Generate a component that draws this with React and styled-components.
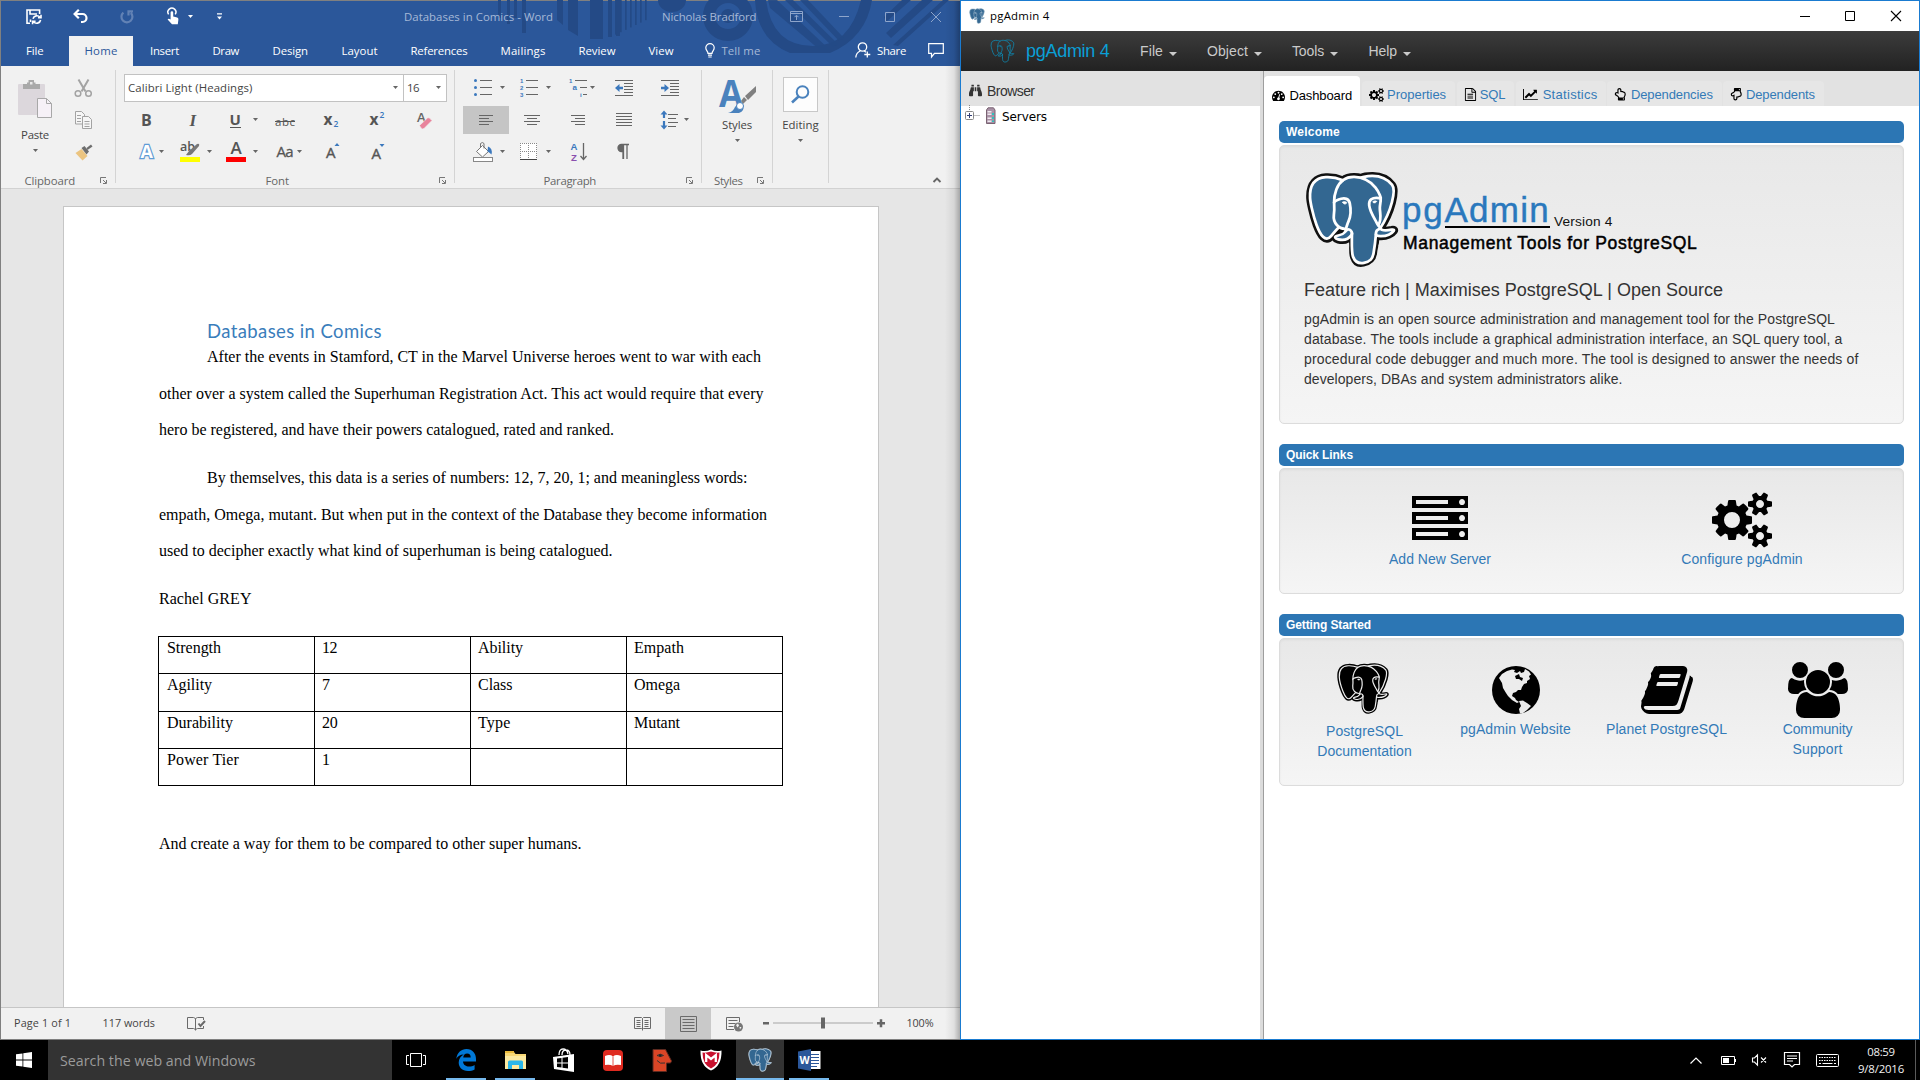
import React, { useLayoutEffect, useRef, useState } from "react";
import styled, { createGlobalStyle, css } from "styled-components";
import { FaBinoculars, FaRegHandPointUp, FaRegHandPointDown } from "react-icons/fa";

const UI = '"Open Sans", "Noto Sans", sans-serif';
const SANS = '"Liberation Sans", Arial, sans-serif';
const SERIF = '"Liberation Serif", "Times New Roman", serif';

const GlobalStyle = createGlobalStyle`
  * { box-sizing: border-box; }
  html, body { margin: 0; padding: 0; overflow: hidden; background: #000; }
  svg { display: block; flex: none; overflow: visible; }
`;

/* ---------- text that is tracked to a given measure ---------- */
const FitBox = styled.span`
  display: inline-block;
  flex: none;
  white-space: nowrap;
  width: ${(p) => p.$w}px;
  margin-left: ${(p) => p.$ml || 0}px;
`;

function Fit({ w, ml, children, className }) {
  const ref = useRef(null);
  const [spacing, setSpacing] = useState(0);
  useLayoutEffect(() => {
    const el = ref.current;
    el.style.letterSpacing = "0px";
    const natural = el.getBoundingClientRect().width;
    const n = el.textContent.length;
    const next = n ? (w - natural) / n : 0;
    el.style.letterSpacing = `${next}px`;
    setSpacing(next);
  }, [w, children]);
  return (
    <FitBox $w={w} $ml={ml} className={className}>
      <span ref={ref} style={{ letterSpacing: spacing }}>
        {children}
      </span>
    </FitBox>
  );
}

const Gap = styled.span`
  flex: none;
  width: ${(p) => p.$w}px;
`;

/* ---------- elephant ---------- */
const BODY =
  "M402.395,271.23c-50.302,10.376-53.76-6.655-53.76-6.655c53.111-78.808,75.313-178.843,56.153-203.326c-52.27-66.785-142.752-35.2-144.262-34.38l-0.486,0.087c-9.938-2.063-21.06-3.292-33.56-3.496c-22.761-0.373-40.026,5.967-53.127,15.902c0,0-161.411-66.495-153.904,83.63c1.597,31.938,45.776,241.657,98.471,178.312c19.26-23.163,37.869-42.748,37.869-42.748c9.243,6.14,20.308,9.272,31.908,8.147l0.901-0.765c-0.28,2.876-0.152,5.689,0.361,9.019c-13.575,15.167-9.586,17.83-36.723,23.416c-27.459,5.659-11.328,15.734-0.796,18.367c12.768,3.193,42.307,7.716,62.266-20.224l-0.796,3.188c5.319,4.26,9.054,27.711,8.428,48.969c-0.626,21.259-1.044,35.854,3.147,47.254c4.191,11.4,8.368,37.05,44.042,29.406c29.809-6.388,45.256-22.942,47.405-50.555c1.525-19.631,4.976-16.729,5.194-34.28l2.768-8.309c3.192-26.611,0.507-35.196,18.872-31.203l4.463,0.392c13.517,0.615,31.208-2.174,41.591-7c22.358-10.376,35.618-27.7,13.573-23.148z";
const LINES = [
  "M215.866,286.484c-1.385,49.516,0.348,99.377,5.193,111.495c4.848,12.118,15.223,35.688,50.9,28.045c29.806-6.39,40.651-18.756,45.357-46.051c3.466-20.082,10.148-75.854,11.005-87.281",
  "M173.104,38.256c0,0-161.521-66.016-154.012,84.109c1.597,31.938,45.779,241.664,98.473,178.316c19.256-23.166,36.671-41.335,36.671-41.335",
  "M260.349,26.207c-5.591,1.753,89.848-34.889,144.087,34.417c19.159,24.484-3.043,124.519-56.153,203.329",
  "M348.282,263.953c0,0,3.461,17.036,53.764,6.653c22.04-4.552,8.776,12.774-13.577,23.155c-18.345,8.514-59.474,10.696-60.146-1.069c-1.729-30.355,21.647-21.133,19.96-28.739c-1.525-6.85-11.979-13.573-18.894-30.338c-6.037-14.633-82.796-126.849,21.287-110.183c3.813-0.789-27.146-99.002-124.553-100.599c-97.385-1.597-94.19,119.762-94.19,119.762",
  "M188.604,274.334c-13.577,15.166-9.584,17.829-36.723,23.417c-27.459,5.66-11.326,15.733-0.797,18.365c12.768,3.195,42.307,7.718,62.266-20.229c6.078-8.509-0.036-22.086-8.385-25.547c-4.034-1.671-9.428-3.765-16.361,3.994z",
  "M187.715,274.069c-1.368-8.917,2.93-19.528,7.536-31.942c6.922-18.626,22.893-37.255,10.117-96.339c-9.523-44.029-73.396-9.163-73.436-3.193c-0.039,5.968,2.889,30.26-1.067,58.548c-5.162,36.913,23.488,68.132,56.479,64.938",
  "M350.676,123.432c0.863,15.994-3.445,26.888-3.988,43.914c-0.804,24.748,11.799,53.074-7.191,81.435",
];

function Elephant({ width, height, edge, edgeWidth = 37, fill, line, lineWidth = 12.5 }) {
  return (
    <svg width={width} height={height} viewBox="0 0 432 445.4" preserveAspectRatio="none">
      <path d={BODY} fill={fill} stroke={edge} strokeWidth={edgeWidth} />
      <path d={BODY} fill={fill} />
      <g fill="none" stroke={line} strokeWidth={lineWidth} strokeLinecap="round" strokeLinejoin="round">
        {LINES.map((d) => (
          <path key={d} d={d} />
        ))}
        <path fill={line} strokeWidth="4" d="M172.517,141.7c-0.288,2.039,3.733,7.48,8.976,8.207c5.234,0.73,9.714-3.522,9.998-5.559c0.284-2.039-3.732-4.285-8.977-5.015c-5.237-0.731-9.719,0.333-9.996,2.367z" />
        <path fill={line} strokeWidth="2" d="M331.941,137.543c0.284,2.039-3.732,7.48-8.976,8.207c-5.238,0.73-9.718-3.522-10.005-5.559c-0.277-2.039,3.74-4.285,8.979-5.015c5.239-0.73,9.718,0.333,10.002,2.368z" />
      </g>
    </svg>
  );
}

/* ---------- glyphs on the 1792 grid ---------- */
const GLYPHS = {
  server: [1792, "M128 1408h1024v-128H128v128zm0-512h1024V768H128v128zm1568 448q0-40-28-68t-68-28-68 28-28 68 28 68 68 28 68-28 28-68zM128 384h1024V256H128v128zm1568 448q0-40-28-68t-68-28-68 28-28 68 28 68 68 28 68-28 28-68zm0-512q0-40-28-68t-68-28-68 28-28 68 28 68 68 28 68-28 28-68zm96 832v384H0v-384h1792zm0-512v384H0V640h1792zm0-512v384H0V128h1792z"],
  cogs: [1920, "M896 896q0-106-75-181t-181-75-181 75-75 181 75 181 181 75 181-75 75-181zm768 512q0-52-38-90t-90-38-90 38-38 90q0 53 37.5 90.5t90.5 37.5 90.5-37.5 37.5-90.5zm0-1024q0-52-38-90t-90-38-90 38-38 90q0 53 37.5 90.5T1536 512t90.5-37.5T1664 384zm-384 421v185q0 10-7 19.5t-16 10.5l-155 24q-11 35-32 76 34 48 90 115 7 11 7 20 0 12-7 19-23 30-82.5 89.5T999 1424q-11 0-21-7l-115-90q-37 19-77 31-11 108-23 155-7 24-30 24H547q-11 0-20-7.5t-10-17.5l-23-153q-34-10-75-31l-118 89q-7 7-20 7-11 0-21-8-144-133-144-160 0-9 7-19 10-14 41-53t47-61q-23-44-35-82l-152-24q-10-1-17-9.5T0 987V802q0-10 7-19.5T23 772l155-24q11-35 32-76-34-48-90-115-7-11-7-20 0-12 7-20 22-30 82-89t79-59q11 0 21 7l115 90q34-18 77-32 11-108 23-154 7-24 30-24h186q11 0 20 7.5t10 17.5l23 153q34 10 75 31l118-89q8-7 20-7 11 0 21 8 144 133 144 160 0 8-7 19-12 16-42 54t-45 60q23 48 34 82l152 23q10 2 17 10.5t7 19.5zm640 533v140q0 16-149 31-12 27-30 52 51 113 51 138 0 4-4 7-122 71-124 71-8 0-46-47t-52-68q-20 2-30 2t-30-2q-14 21-52 68t-46 47q-2 0-124-71-4-3-4-7 0-25 51-138-18-25-30-52-149-15-149-31v-140q0-16 149-31 13-29 30-52-51-113-51-138 0-4 4-7 4-2 35-20t59-34 30-16q8 0 46 46.5t52 67.5q20-2 30-2t30 2q51-71 92-112l6-2q4 0 124 70 4 3 4 7 0 25-51 138 17 23 30 52 149 15 149 31zm0-1024v140q0 16-149 31-12 27-30 52 51 113 51 138 0 4-4 7-122 71-124 71-8 0-46-47t-52-68q-20 2-30 2t-30-2q-14 21-52 68t-46 47q-2 0-124-71-4-3-4-7 0-25 51-138-18-25-30-52-149-15-149-31V314q0-16 149-31 13-29 30-52-51-113-51-138 0-4 4-7 4-2 35-20t59-34 30-16q8 0 46 46.5t52 67.5q20-2 30-2t30 2q51-71 92-112l6-2q4 0 124 70 4 3 4 7 0 25-51 138 17 23 30 52 149 15 149 31z"],
  users: [1920, "M593 896q-162 5-265 128H194q-82 0-138-40.5T0 865q0-353 124-353 6 0 43.5 21t97.5 42.5T384 597q67 0 133-23-5 37-5 66 0 139 81 256zm1071 637q0 120-73 189.5t-194 69.5H523q-121 0-194-69.5T256 1533q0-53 3.5-103.5t14-109T300 1212t43-97.5 62-81 85.5-53.5T602 960q10 0 43 21.5t73 48 107 48 135 21.5 135-21.5 107-48 73-48 43-21.5q61 0 111.5 20t85.5 53.5 62 81 43 97.5 26.5 108.5 14 109 3.5 103.5zM640 256q0 106-75 181t-181 75-181-75-75-181 75-181T384 0t181 75 75 181zm704 384q0 159-112.5 271.5T960 1024 688.5 911.5 576 640t112.5-271.5T960 256t271.5 112.5T1344 640zm576 225q0 78-56 118.5t-138 40.5h-134q-103-123-265-128 81-117 81-256 0-29-5-66 66 23 133 23 59 0 119-21.5t97.5-42.5 43.5-21q124 0 124 353zm-128-609q0 106-75 181t-181 75-181-75-75-181 75-181 181-75 181 75 75 181z"],
  book: [1664, "M1639 478q40 57 18 129l-275 906q-19 64-76.5 107.5T1183 1664H260q-77 0-148.5-53.5T12 1479q-24-67-2-127 0-4 3-27t4-37q1-8-3-21.5t-3-19.5q2-11 8-21t16.5-23.5T52 1179q23-38 45-91.5t30-91.5q3-10 .5-30t-.5-28q3-11 17-28t17-23q21-36 42-92t25-90q1-9-2.5-32t.5-28q4-13 22-30.5t22-22.5q19-26 42.5-84.5T320 411q1-8-3-25.5t-2-26.5q2-8 9-18t18-23 17-21q8-12 16.5-30.5t15-35 16-36 19.5-32 26.5-23.5 36-11.5T533 134l-1 3q38-9 51-9h761q74 0 114 56t18 130l-274 906q-36 119-71.5 153.5T1002 1408H133q-27 0-38 15-11 16-1 43 24 70 144 70h923q29 0 56-15.5t35-41.5l300-987q7-22 5-57 38 15 59 43zM575 480q-4 13 2 22.5t20 9.5h608q13 0 25.5-9.5T1247 480l21-64q4-13-2-22.5t-20-9.5H638q-13 0-25.5 9.5T596 416zm-83 256q-4 13 2 22.5t20 9.5h608q13 0 25.5-9.5T1164 736l21-64q4-13-2-22.5t-20-9.5H555q-13 0-25.5 9.5T513 672z"],
  dashboard: [1792, "M384 1152q0-53-37.5-90.5T256 1024t-90.5 37.5T128 1152t37.5 90.5T256 1280t90.5-37.5T384 1152zm192-448q0-53-37.5-90.5T448 576t-90.5 37.5T320 704t37.5 90.5T448 832t90.5-37.5T576 704zm428 481l101-382q6-26-7.5-48.5T1059 725t-48 6.5-30 39.5l-101 382q-60 5-107 43.5t-63 98.5q-20 77 20 146t117 89 146-20 89-117q16-60-6-117t-72-91zm660-33q0-53-37.5-90.5T1536 1024t-90.5 37.5-37.5 90.5 37.5 90.5 90.5 37.5 90.5-37.5 37.5-90.5zm-640-640q0-53-37.5-90.5T896 384t-90.5 37.5T768 512t37.5 90.5T896 640t90.5-37.5T1024 512zm448 192q0-53-37.5-90.5T1344 576t-90.5 37.5T1216 704t37.5 90.5T1344 832t90.5-37.5T1472 704zm320 448q0 261-141 483-19 29-54 29H195q-35 0-54-29Q0 1414 0 1152q0-182 71-348t191-286 286-191 348-71 348 71 286 191 191 286 71 348z"],
  file: [1792, "M1596 380q28 28 48 76t20 88v1152q0 40-28 68t-68 28H224q-40 0-68-28t-28-68V96q0-40 28-68t68-28h896q40 0 88 20t76 48zm-444-244v376h376q-10-29-22-41l-313-313q-12-12-41-22zm384 1528V640h-416q-40 0-68-28t-28-68V128H256v1536h1280zM480 832q0-14 9-23t23-9h704q14 0 23 9t9 23v64q0 14-9 23t-23 9H512q-14 0-23-9t-9-23v-64zm736 224q14 0 23 9t9 23v64q0 14-9 23t-23 9H512q-14 0-23-9t-9-23v-64q0-14 9-23t23-9h704zm0 256q14 0 23 9t9 23v64q0 14-9 23t-23 9H512q-14 0-23-9t-9-23v-64q0-14 9-23t23-9h704z"],
  chart: [2048, "M2048 1536v128H0V128h128v1408h1920zM1920 288v435q0 21-19.5 29.5T1865 745l-121-121-633 633q-10 10-23 10t-23-10L832 1024l-416 416-192-192 585-585q10-10 23-10t23 10l233 233 464-464-121-121q-16-16-7.5-35.5T1453 256h435q14 0 23 9t9 23z"],
};

function Glyph({ name, size }) {
  const [w, d] = GLYPHS[name];
  return (
    <svg width={(w / 1792) * size} height={size} viewBox={`0 0 ${w} 1792`}>
      <path d={d} fill="#000" />
    </svg>
  );
}

function Globe() {
  return (
    <svg width="48" height="56" viewBox="0 0 48 56">
      <circle cx="24" cy="28" r="24" fill="#000" />
      <path fill="#ececec" d="M7 16 L10 12 L15 9 L20 7.5 L23 8 L22 10 L25 11 L28 9 L29 11 L32 10 L33 7 L37 9.5 L39 12.5 L37 14 L38 17 L35 19 L35 21 L32 22 L30 25 L29 28 L26 28 L24 30 L21 31 L20 34 L23 36 L24 38 L27 40 L25 41 L20 38 L16 34 L14 31 L11 26 L10 21 Z" />
      <path fill="#000" d="M23 14 L27 12 L28 15 L31 16 L30 19 L27 17 L24 17 Z" />
      <path fill="#ececec" d="M27 39 L31 38.5 L35 41 L39 44 L35 48 L31 51 L28 51.5 L27 47 L29 44 Z" />
    </svg>
  );
}

/* ---------- desktop ---------- */
const Desktop = styled.div`
  width: 1920px;
  height: 1080px;
  display: grid;
  grid-template: 1040px 40px / 960px 960px;
  background: #000;
  overflow: hidden;
`;

/* ---------- Word window ---------- */
const WordWindow = styled.section`
  position: relative;
  display: grid;
  grid-template-rows: 65px 123px 818px 32px;
  border: 1px solid #808080;
  border-right: 0;
  font-family: ${UI};
  font-size: 11.4px;
  color: #444;
  background: #e6e6e6;
`;
const EdgeShade = styled.div`
  position: absolute;
  top: 0;
  right: 0;
  bottom: 0;
  width: 15px;
  background: linear-gradient(to right, rgba(0, 0, 0, 0), rgba(0, 0, 0, 0.07) 60%, rgba(0, 0, 0, 0.28));
`;
const WordHead = styled.header`
  position: relative;
  background: #2b579a;
  color: #fff;
  display: grid;
  grid-template-rows: 35px 30px;
`;
const HeadArt = styled.svg`
  position: absolute;
  left: 0;
  top: 0;
  pointer-events: none;
`;
const HeadRow = styled.div`
  position: relative;
  display: flex;
  align-items: center;
  padding-bottom: ${(p) => p.$pb || 0}px;
`;
const Dim = styled.span`
  color: #a6b9d7;
  display: flex;
`;
const HomeTab = styled.span`
  display: flex;
  align-self: flex-start;
  align-items: center;
  justify-content: center;
  width: 64px;
  height: 30px;
  padding-bottom: 2px;
  margin-left: 25.5px;
  background: #f1f1f1;
  color: #2b579a;
`;

function WordArt() {
  const stripes = [0, 1, 2, 3, 4, 5, 6, 7];
  return (
    <HeadArt width="958" height="65" viewBox="1 1 958 65" fill="#244a86" stroke="none">
      <path d="M498 0h3v18h-3zM507 0h3v24h-3zM514 0h3v18h-3zM522 0h4v33h-4z" />
      <path d="M557 0h6v25l-6-5zM568 0h10v36l-10-6zM590 0h13v39h-13zM608 0h4v37h-4zM616 0h4v36h-4z" />
      {stripes.map((i) => (
        <rect key={i} x={610 + i * 5} y="0" width="1.7" height={37 - i * 2.4} />
      ))}
      <path d="M658 0a14 12 0 0 0 28 0z" />
      <circle cx="728" cy="16" r="19" fill="none" stroke="#244a86" strokeWidth="12" />
      <circle cx="728" cy="16" r="7" />
      <path d="M755 0 Q757 40 790 53 H830 Q866 38 872 0 H861 Q850 46 813 46 Q772 46 766 0z" />
      <path d="M768 0h9l53 50h-10l-50-42zM785 0h8l45 44-5 3zM800 0h8l36 38-5 3z" opacity=".9" />
      <path d="M884 17L902 0h9l-25 22zM886 33L922 0h11l-42 38zM893 45L943 0h6l-51 46z" />
    </HeadArt>
  );
}

function WordHeader() {
  return (
    <WordHead>
      <WordArt />
      <HeadRow $pb={4}>
        <Gap $w={25} />
        <svg width="16" height="16" viewBox="0 0 16 16" fill="none" stroke="#fff" strokeWidth="1.6">
          <path d="M4 14.2H1V1h12.6v4M4 1v4h7" />
          <path d="M4.5 13v-2.5" />
          <path d="M7 9.8a4 4 0 0 1 7-1.5M15 5.8v3h-3M14.6 11a4 4 0 0 1-7 1.8M6.6 15.2v-3h3" />
        </svg>
        <Gap $w={31} />
        <svg width="15" height="15" viewBox="0 0 15 15" fill="none" stroke="#fff" strokeWidth="2.2">
          <path d="M1.8 5H9.5a4 4 0 0 1 0 8H8M5.8 .8L1.6 5l4.2 4.2" />
        </svg>
        <Gap $w={32} />
        <svg width="14" height="14" viewBox="0 0 14 14" fill="none" stroke="#6282b5" strokeWidth="2.2">
          <path d="M3.4 2.6a5.5 5.5 0 1 0 7.4.3M8.5 5.4V1.3H13" />
        </svg>
        <Gap $w={33} />
        <svg width="12" height="17" viewBox="0 0 12 17">
          <path d="M1.6 6.4a4 4 0 1 1 6.6 0" fill="none" stroke="#fff" strokeWidth="1.5" />
          <path d="M3.6 4.5a1.3 1.3 0 0 1 2.6 0v4l4 1q1.400.4 1.200 2l-.6 4.700H5L.6 11.600q.8-1.600 3 0z" fill="#fff" />
        </svg>
        <Gap $w={8.5} />
        <svg width="5" height="3" viewBox="0 0 5 3"><path d="M0 0h5L2.500 3z" fill="#fff" /></svg>
        <Gap $w={24} />
        <svg width="5" height="7" viewBox="0 0 5 7"><path d="M0 .2h5v1.200H0zM0 3.400h5L2.500 6.400z" fill="#fff" /></svg>
        <Dim><Fit w={149} ml={182.5}>Databases in Comics - Word</Fit></Dim>
        <Dim><Fit w={94.5} ml={109}>Nicholas Bradford</Fit></Dim>
        <Gap $w={33.5} />
        <svg width="13" height="11" viewBox="0 0 13 11" fill="none" stroke="#8ea5cb">
          <path d="M.5.5h12v10H.5zM.5 2.500h12M6.500 9V4.500M4.500 6.200l2-2 2 2" />
        </svg>
        <Gap $w={35.5} />
        <svg width="10" height="10" viewBox="0 0 10 10"><path d="M0 4.500h10" stroke="#8ea5cb" /></svg>
        <Gap $w={36} />
        <svg width="10" height="10" viewBox="0 0 10 10"><path d="M.5.500h9v9h-9z" fill="none" stroke="#8ea5cb" /></svg>
        <Gap $w={36} />
        <svg width="10" height="10" viewBox="0 0 10 10"><path d="M0 0l10 10M10 0L0 10" stroke="#8ea5cb" /></svg>
      </HeadRow>
      <HeadRow $pb={2}>
        <Fit w={17.5} ml={25}>File</Fit>
        <HomeTab><Fit w={33}>Home</Fit></HomeTab>
        <Fit w={29} ml={17}>Insert</Fit>
        <Fit w={26.5} ml={33.5}>Draw</Fit>
        <Fit w={35.5} ml={33.5}>Design</Fit>
        <Fit w={36} ml={33.5}>Layout</Fit>
        <Fit w={57} ml={33}>References</Fit>
        <Fit w={45} ml={33}>Mailings</Fit>
        <Fit w={37} ml={33}>Review</Fit>
        <Fit w={25} ml={33}>View</Fit>
        <Gap $w={31.5} />
        <svg width="10" height="15" viewBox="0 0 10 15" fill="none" stroke="#fff" strokeWidth="1.2">
          <path d="M3 10.400C3 8 .8 7.500.8 4.800a4.200 4.200 0 0 1 8.400 0C9.200 7.500 7 8 7 10.400zM3 12.200h4M3.300 14h3.400" />
        </svg>
        <Dim><Fit w={39} ml={6.5}>Tell me</Fit></Dim>
        <Gap $w={94} />
        <svg width="16" height="16" viewBox="0 0 16 16" fill="none" stroke="#fff" strokeWidth="1.3">
          <circle cx="7.500" cy="5" r="4.200" />
          <path d="M.8 15.500C1 12 3 10 5.200 9M9 8.800l2 1.400M12.300 9.500v6M9.300 12.500h6" />
        </svg>
        <Fit w={29} ml={6.5}>Share</Fit>
        <Gap $w={22} />
        <svg width="16" height="15" viewBox="0 0 16 15" fill="none" stroke="#fff" strokeWidth="1.200">
          <path d="M.7.7h14.600v9.600H6.500L3.500 14v-3.700H.7z" />
        </svg>
      </HeadRow>
    </WordHead>
  );
}

/* ---------- ribbon ---------- */
const Ribbon = styled.div`
  display: flex;
  background: #f1f1f1;
  border-bottom: 1px solid #d2d2d2;
`;
const Group = styled.div`
  position: relative;
  flex: none;
  width: ${(p) => p.$w}px;
  margin: 4px 0 5px;
  padding: 4px 0 0 ${(p) => p.$pl || 0}px;
  border-right: 1px solid #d4d4d4;
  display: grid;
  grid-template-rows: 95px 22px;
`;
const GroupFoot = styled.div`
  display: flex;
  align-items: center;
  color: #666;
  margin-left: ${(p) => -(p.$pl || 0)}px;
`;
const ToolGrid = styled.div`
  display: grid;
  grid-template-columns: repeat(${(p) => p.$cols}, 46px);
  grid-auto-rows: 28px;
  row-gap: 4px;
  align-content: start;
`;
const Cell = styled.svg.attrs((p) => ({
  width: p.$narrow ? 28 : 46,
  height: 28,
  viewBox: p.$narrow ? "9 0 28 28" : "0 0 46 28",
}))`
  background: ${(p) => (p.$on ? "#c5c5c5" : "transparent")};
`;
const Combos = styled.div`
  grid-column: 1 / -1;
  display: flex;
  color: #444;
`;
const Combo = styled.div`
  height: 28px;
  width: ${(p) => p.$w}px;
  margin-right: -1px;
  background: #fff;
  border: 1px solid #c2c2c2;
  display: flex;
  align-items: center;
  justify-content: space-between;
  padding: 0 5px 1px 3px;
`;
const BigTool = styled.div`
  display: flex;
  flex-direction: column;
  align-items: center;
  width: ${(p) => p.$w}px;
  padding-top: ${(p) => p.$pt || 0}px;
`;
const BigLabel = styled.div`
  height: 16px;
  line-height: 16px;
  margin: ${(p) => p.$m};
`;
const ClipBody = styled.div`
  display: flex;
`;
const ClipSmall = styled.div`
  display: grid;
  grid-auto-rows: 28px;
  row-gap: 4px;
  margin-left: 3px;
  align-content: start;
`;
const SearchBox = styled.div`
  width: 35px;
  height: 35px;
  border: 1px solid #c8c8c8;
  background: #fdfdfd;
  display: flex;
  align-items: center;
  justify-content: center;
`;
const RibbonEnd = styled.div`
  flex: 1;
  display: flex;
  justify-content: flex-end;
  align-items: flex-end;
  padding: 0 19px 5px 0;
`;

const Caret = ({ x = 0, y = 0 }) => <path d={`M${x} ${y}h5l-2.500 3z`} fill="#666" />;
const CaretIcon = () => (
  <svg width="5" height="3" viewBox="0 0 5 3"><Caret /></svg>
);
const Launcher = () => (
  <svg width="7" height="7" viewBox="0 0 7 7" fill="none" stroke="#777">
    <path d="M.5 6V.5H6M3 3l3 3M6.500 3v3.500H3" />
  </svg>
);
const Rows = ({ x, ys, w, ws }) => (
  <g fill="#666">
    {ys.map((y, i) => (
      <rect key={y} x={ws ? ws[i][0] : x} y={y} width={ws ? ws[i][1] : w} height="1" />
    ))}
  </g>
);
const icoText = { fontFamily: UI };

function ClipboardGroup() {
  return (
    <Group $w={115}>
      <ClipBody>
        <BigTool $w={68} $pt={6}>
          <svg width="34" height="38" viewBox="0 0 34 38">
            <rect x="0" y="4" width="27" height="31" rx="1" fill="#dcd7dc" />
            <path d="M5 4h4V2.500h1.500V0h5.500v2.500h1.500V4h4.500v5H5z" fill="#a9a9a9" />
            <rect x="12" y="2" width="2.500" height="2.500" fill="#e8e8e8" />
            <path d="M19.500 18.500h9l5 5v14h-14z" fill="#f6f1f7" stroke="#a8a8a8" />
            <path d="M28.500 18.500v5h5" fill="none" stroke="#a8a8a8" />
          </svg>
          <BigLabel $m="9px 0 6px"><Fit w={28}>Paste</Fit></BigLabel>
          <CaretIcon />
        </BigTool>
        <ClipSmall>
          <Cell $narrow>
            <g fill="none" stroke="#a3a3a3" strokeWidth="1.500">
              <path d="M15.500 5.500l7 12M25.500 5.500l-7 12" strokeWidth="2" />
              <circle cx="15" cy="19.500" r="2.800" /><circle cx="25.500" cy="19.500" r="2.800" />
            </g>
          </Cell>
          <Cell $narrow>
            <g fill="#f6f6f6" stroke="#a3a3a3">
              <path d="M12.500 5.500h6l3 3v9.500h-9z" /><path d="M19.500 10.500h6l3 3v9h-9z" />
              <path d="M14 9.500h4M14 12.500h4M14 15.500h4M21.500 15.500h5M21.500 18h5M21.500 20.500h5" />
            </g>
          </Cell>
          <Cell $narrow>
            <path d="M12.500 15l6-4 6 7-5 4.500z" fill="#ebc480" />
            <path d="M18.500 10l3-2 4.500 5.500-2.500 3z" fill="#6e6e6e" />
            <path d="M23.500 10l4.500-3.500 1.500 2-5 3.500z" fill="#6e6e6e" />
          </Cell>
        </ClipSmall>
      </ClipBody>
      <GroupFoot>
        <Fit w={50.5} ml={23.5}>Clipboard</Fit>
        <Gap $w={25} />
        <Launcher />
      </GroupFoot>
    </Group>
  );
}

function FontGroup() {
  return (
    <Group $w={339} $pl={8}>
      <ToolGrid $cols={7}>
        <Combos>
          <Combo $w={280}><Fit w={124.5}>Calibri Light (Headings)</Fit><CaretIcon /></Combo>
          <Combo $w={44}><Fit w={12}>16</Fit><CaretIcon /></Combo>
        </Combos>
        <Cell><text x="17" y="20" fontSize="16" fontWeight="700" fill="#555" style={icoText}>B</text></Cell>
        <Cell><text x="19.500" y="20" fontSize="17" fontWeight="700" fontStyle="italic" fill="#555" fontFamily={SERIF}>I</text></Cell>
        <Cell>
          <text x="13.500" y="19" fontSize="15" fontWeight="700" fill="#555" style={icoText}>U</text>
          <rect x="14" y="21" width="11" height="1" fill="#555" /><Caret x={37} y={12} />
        </Cell>
        <Cell>
          <text x="13" y="20" fontSize="11.500" fill="#555" textLength="20" style={icoText}>abc</text>
          <rect x="13" y="15" width="20" height="1" fill="#555" />
        </Cell>
        <Cell>
          <text x="15.500" y="19" fontSize="15.500" fontWeight="700" fill="#555" style={icoText}>x</text>
          <text x="25.500" y="21" fontSize="8.500" fontWeight="600" fill="#3b78bd" style={icoText}>2</text>
        </Cell>
        <Cell>
          <text x="15.500" y="19" fontSize="15.500" fontWeight="700" fill="#555" style={icoText}>x</text>
          <text x="25.500" y="12" fontSize="8.500" fontWeight="600" fill="#3b78bd" style={icoText}>2</text>
        </Cell>
        <Cell>
          <text x="17" y="16" fontSize="13" fontWeight="600" fill="#666" style={icoText}>A</text>
          <path d="M19.500 19.500l8-7.500q1.500-1 3 1l1.500 1.500-8 8q-1.500 1-3-.5z" fill="#e8839b" stroke="#f1f1f1" strokeWidth=".6" />
        </Cell>
        <Cell>
          <text x="16.500" y="20" fontSize="18" fontWeight="700" fill="#fff" stroke="#5f9bd5" strokeWidth="2.400" paintOrder="stroke" style={icoText}>A</text>
          <Caret x={35} y={12} />
        </Cell>
        <Cell>
          <text x="10" y="13" fontSize="12.500" fontWeight="600" fill="#555" style={icoText}>ab</text>
          <path d="M16 17l3-4 8-7q3-1 2 2l-7 8q-2 2-6 1z" fill="#777" />
          <rect x="10" y="19" width="20" height="5" fill="#ffff00" /><Caret x={37} y={12} />
        </Cell>
        <Cell>
          <text x="14.500" y="16" fontSize="17" fontWeight="600" fill="#555" style={icoText}>A</text>
          <rect x="10" y="19" width="20" height="5" fill="#fe0000" /><Caret x={37} y={12} />
        </Cell>
        <Cell>
          <text x="14.500" y="19" fontSize="15" fill="#555" textLength="17" stroke="#555" strokeWidth=".3" style={icoText}>Aa</text>
          <Caret x={35} y={12} />
        </Cell>
        <Cell>
          <text x="18" y="19.500" fontSize="15" fill="#555" stroke="#555" strokeWidth=".4" style={icoText}>A</text>
          <path d="M26.500 8h5L29 5z" fill="#3b78bd" />
        </Cell>
        <Cell>
          <text x="17.500" y="20.500" fontSize="15" fill="#555" stroke="#555" strokeWidth=".4" style={icoText}>A</text>
          <path d="M25.500 6h5L28 9z" fill="#3b78bd" />
        </Cell>
      </ToolGrid>
      <GroupFoot $pl={8}>
        <Fit w={23.5} ml={149.5}>Font</Fit>
        <Gap $w={150} />
        <Launcher />
      </GroupFoot>
    </Group>
  );
}

function ParagraphGroup() {
  return (
    <Group $w={247} $pl={8}>
      <ToolGrid $cols={5}>
        <Cell>
          <g fill="#3b78bd"><circle cx="12.500" cy="6.500" r="1.500" /><circle cx="12.500" cy="13.500" r="1.500" /><circle cx="12.500" cy="20.500" r="1.500" /></g>
          <Rows x={17} w={12} ys={[6, 13, 20]} /><Caret x={37} y={12} />
        </Cell>
        <Cell>
          <g fill="#3b78bd" fontSize="6" fontWeight="700" fontFamily={SANS}><text x="11" y="9">1</text><text x="11" y="16">2</text><text x="11" y="23">3</text></g>
          <Rows x={17} w={12} ys={[6, 13, 20]} /><Caret x={37} y={12} />
        </Cell>
        <Cell>
          <g fill="#3b78bd" fontSize="6" fontWeight="700" fontFamily={SANS}><text x="14" y="8.500">1</text><text x="17.500" y="16" fontSize="8">a</text><text x="25" y="22.500">i</text></g>
          <Rows ys={[6, 13, 20]} ws={[[20, 12], [25, 7], [28, 4]]} /><Caret x={35} y={12} />
        </Cell>
        <Cell>
          <Rows ys={[6, 9, 12, 15, 18, 21]} ws={[[14, 18], [23, 9], [23, 9], [23, 9], [23, 9], [14, 18]]} />
          <path d="M14 14l4.500-4v2.700h3.500v2.600h-3.500V18z" fill="#3b78bd" />
        </Cell>
        <Cell>
          <Rows ys={[6, 9, 12, 15, 18, 21]} ws={[[14, 18], [23, 9], [23, 9], [23, 9], [23, 9], [14, 18]]} />
          <path d="M22 14l-4.500-4v2.700H14v2.600h3.500V18z" fill="#3b78bd" />
        </Cell>
        <Cell $on><Rows ys={[9, 12, 15, 18]} ws={[[16, 14], [16, 10], [16, 14], [16, 10]]} /></Cell>
        <Cell><Rows ys={[9, 12, 15, 18]} ws={[[15, 16], [18, 10], [15, 16], [18, 10]]} /></Cell>
        <Cell><Rows ys={[9, 12, 15, 18]} ws={[[16, 14], [20, 10], [16, 14], [20, 10]]} /></Cell>
        <Cell><Rows x={15} w={16} ys={[7, 10, 13, 16, 19]} /></Cell>
        <Cell>
          <path d="M17 4.500l3.500 4h-2.400V12h-2.200V8.500h-2.400zM17 23.500l3.500-4h-2.400V15h-2.200v4.500h-2.400z" fill="#3b78bd" />
          <Rows ys={[8, 12, 16, 20]} ws={[[21, 10], [21, 8], [21, 10], [21, 8]]} /><Caret x={37} y={12} />
        </Cell>
        <Cell>
          <path d="M13.500 13.500l6-6 6 6-6 5.500z" fill="#fff" stroke="#777" /><path d="M17.500 10V5.500q2-2 3.500 0v5" fill="none" stroke="#777" />
          <path d="M25 8.500q5 2 3.500 8-2-2-4-3z" fill="#3b78bd" />
          <rect x="10.500" y="19.500" width="19" height="4" fill="#fff" stroke="#888" /><Caret x={37} y={12} />
        </Cell>
        <Cell>
          <rect x="11" y="5" width="17" height="16" fill="#fff" />
          <path d="M11 5.500h17M11 13.500h17M11.500 5v16M19.500 5v16M27.500 5v16" stroke="#888" strokeDasharray="1 1" fill="none" />
          <path d="M11 21.500h17" stroke="#444" /><Caret x={37} y={12} />
        </Cell>
        <Cell>
          <g fontSize="9.600" fontWeight="700" fontFamily={SANS}>
            <text x="15.500" y="12" fill="#3b78bd">A</text>
            <text x="16" y="23" fill="#8a4fae">Z</text>
          </g>
          <path d="M28.500 5v16.500M25.500 18l3 3.500 3-3.500" fill="none" stroke="#666" strokeWidth="1.300" />
        </Cell>
        <Cell><path d="M28 6.500h-7.500a3.500 3.500 0 0 0 0 7H22V21M22.500 7v14M26 7v14" fill="none" stroke="#666" strokeWidth="1.300" /><path d="M22 6.500h-1.500a3.500 3.500 0 0 0 0 7H22z" fill="#666" /></Cell>
      </ToolGrid>
      <GroupFoot $pl={8}>
        <Fit w={52.5} ml={88.5}>Paragraph</Fit>
        <Gap $w={90} />
        <Launcher />
      </GroupFoot>
    </Group>
  );
}

function WordRibbon() {
  return (
    <Ribbon>
      <ClipboardGroup />
      <FontGroup />
      <ParagraphGroup />
      <Group $w={71}>
        <BigTool $w={70} $pt={4}>
          <svg width="37" height="35" viewBox="0 0 37 35">
            <text x="0" y="29" fontSize="38" fontWeight="700" fill="#4a82bd" textLength="24" lengthAdjust="spacingAndGlyphs" style={icoText}>A</text>
            <path d="M22 23l3-4 3 3-4 4zM26 18l11-10v6l-8 8z" fill="#808080" />
            <path d="M9 35q5-1 7-6 3-5 8-2 2 6-4 8z" fill="#4a82bd" />
            <circle cx="21" cy="28" r="3.500" fill="#fff" stroke="#4a82bd" />
          </svg>
          <BigLabel $m="4px 0 6px"><Fit w={30}>Styles</Fit></BigLabel>
          <CaretIcon />
        </BigTool>
        <GroupFoot>
          <Fit w={28.5} ml={12}>Styles</Fit>
          <Gap $w={14} />
          <Launcher />
        </GroupFoot>
      </Group>
      <Group $w={56}>
        <BigTool $w={55} $pt={3}>
          <SearchBox>
            <svg width="19" height="19" viewBox="0 0 19 19" fill="none" stroke="#4a82bd">
              <circle cx="11.500" cy="7" r="5.800" strokeWidth="2" />
              <path d="M7.500 11.500L1 17.500" strokeWidth="2.600" />
            </svg>
          </SearchBox>
          <BigLabel $m="5px 0 6px"><Fit w={36.5}>Editing</Fit></BigLabel>
          <CaretIcon />
        </BigTool>
      </Group>
      <RibbonEnd>
        <svg width="8" height="6" viewBox="0 0 8 6"><path d="M.5 5L4 1.500 7.500 5" fill="none" stroke="#666" strokeWidth="1.900" /></svg>
      </RibbonEnd>
    </Ribbon>
  );
}

/* ---------- document ---------- */
const Canvas = styled.div`
  padding: 17px 0 0 62px;
  overflow: hidden;
`;
const Page = styled.article`
  width: 816px;
  height: 820px;
  background: #fff;
  border: 1px solid #c6c6c6;
  padding: 116px 94px 0;
  font-family: ${SERIF};
  font-size: 16px;
  color: #000;
`;
const Heading = styled.h1`
  margin: 0 0 0 49px;
  font: 400 18.5px/16px Lato, Carlito, sans-serif;
  color: #3a7dbb;
`;
const Para = styled.p`
  margin: 0 0 ${(p) => (p.$mb === undefined ? 11 : p.$mb)}px 1px;
  display: flex;
  flex-direction: column;
  line-height: 36.667px;
`;
const Sheet = styled.div`
  width: 625px;
  display: grid;
  grid-template-columns: repeat(4, 156px);
  grid-template-rows: 37px 38px 37px 37px;
  border: solid #000;
  border-width: 0 1px 1px 0;
  margin-bottom: 40px;
  line-height: 20px;
`;
const SheetCell = styled.div`
  border: solid #000;
  border-width: 1px 0 0 1px;
  padding: 1px 0 0 7px;
  &:nth-child(4n + 1) { padding-left: 8px; }
`;
const SHEET = [
  ["Strength", 54], ["12", 15], ["Ability", 45], ["Empath", 50],
  ["Agility", 45], ["7", 8], ["Class", 34.5], ["Omega", 46],
  ["Durability", 66], ["20", 15.5], ["Type", 32.5], ["Mutant", 46],
  ["Power Tier", 72], ["1", 8], ["", 0], ["", 0],
];

function WordDocument() {
  return (
    <Canvas>
      <Page>
        <Heading><Fit w={175}>Databases in Comics</Fit></Heading>
        <Para>
          <Fit w={554} ml={48}>After the events in Stamford, CT in the Marvel Universe heroes went to war with each</Fit>
          <Fit w={604.5}>other over a system called the Superhuman Registration Act. This act would require that every</Fit>
          <Fit w={455}>hero be registered, and have their powers catalogued, rated and ranked.</Fit>
        </Para>
        <Para>
          <Fit w={540.5} ml={48}>By themselves, this data is a series of numbers: 12, 7, 20, 1; and meaningless words:</Fit>
          <Fit w={608}>empath, Omega, mutant. But when put in the context of the Database they become information</Fit>
          <Fit w={453.5}>used to decipher exactly what kind of superhuman is being catalogued.</Fit>
        </Para>
        <Para $mb={18.33}><Fit w={92.5}>Rachel GREY</Fit></Para>
        <Sheet>
          {SHEET.map(([t, w], i) => (
            <SheetCell key={i}>{t && <Fit w={w}>{t}</Fit>}</SheetCell>
          ))}
        </Sheet>
        <Para><Fit w={422.5}>And create a way for them to be compared to other super humans.</Fit></Para>
      </Page>
    </Canvas>
  );
}

/* ---------- status bar ---------- */
const Status = styled.footer`
  display: flex;
  align-items: center;
  background: #f1f1f1;
  border-top: 1px solid #c6c6c6;
  font-size: 10.8px;
  & > ${FitBox} { margin-bottom: 2px; }
`;
const ViewButton = styled.span`
  display: flex;
  align-items: center;
  justify-content: center;
  width: 46px;
  height: 31px;
  background: ${(p) => (p.$on ? "#c9c9c9" : "transparent")};
`;
const Zoom = styled.svg`
  margin-left: 5px;
`;

function WordStatus() {
  return (
    <Status>
      <Fit w={57} ml={13}>Page 1 of 1</Fit>
      <Fit w={52.5} ml={31.5}>117 words</Fit>
      <Gap $w={32} />
      <svg width="19" height="15" viewBox="0 0 19 15" fill="none" stroke="#6a6a6a">
        <path d="M.5 1.500h6l2 1 2-1h6V4M.5 1.500v11h6l2 1 2-1h6V10M8.500 2.500v12" />
        <path d="M11.500 7.500l2 2.500 4.500-5" strokeWidth="2" />
      </svg>
      <Gap $w={413} />
      <ViewButton>
        <svg width="17" height="15" viewBox="0 0 17 15" fill="none" stroke="#6a6a6a">
          <path d="M.5 1.500h7l1 1 1-1h7v11h-7l-1 1-1-1h-7zM8.500 2.500v12M2.500 4.500h4M2.500 6.500h4M2.500 8.500h4M2.500 10.500h4M10.500 4.500h4M10.500 6.500h4M10.500 8.500h4M10.500 10.500h4" />
        </svg>
      </ViewButton>
      <ViewButton $on>
        <svg width="17" height="16" viewBox="0 0 17 16" fill="none" stroke="#6a6a6a">
          <path d="M.5.500h16v15H.5zM2.500 3.500h12M2.500 6.500h12M2.500 9.500h12M2.500 12.500h12" />
        </svg>
      </ViewButton>
      <ViewButton>
        <svg width="17" height="16" viewBox="0 0 17 16" fill="none" stroke="#6a6a6a">
          <path d="M13.500 6V1.500H.500v12H8M2.500 4.500h9M2.500 7.500h7M2.500 10.500h5" />
          <circle cx="12.500" cy="11" r="4.500" fill="#777" stroke="none" />
          <path d="M10 9l2-1.500 1 2-1.500 2zM13.500 11l2 0-1.500 2.500z" fill="#f1f1f1" stroke="none" />
        </svg>
      </ViewButton>
      <Zoom width="124" height="15" viewBox="0 0 124 15">
        <g fill="#666">
          <rect x="1" y="6" width="6" height="2.500" />
          <rect x="11" y="6.500" width="100" height="1" fill="#a5a5a5" />
          <rect x="59" y="1.500" width="4" height="11" />
          <rect x="115" y="6" width="8" height="2.500" /><rect x="117.750" y="3.250" width="2.500" height="8" />
        </g>
      </Zoom>
      <Fit w={27} ml={20.5}>100%</Fit>
    </Status>
  );
}

/* ---------- pgAdmin window ---------- */
const AdminWindow = styled.section`
  display: grid;
  grid-template-rows: 30px 40px 968px;
  border: 1px solid #1a7bd0;
  background: #fff;
  font-family: ${SANS};
  font-size: 14px;
  color: #333;
`;
const TitleRow = styled.div`
  display: flex;
  align-items: center;
  padding: 0 0 1px 8px;
  font-family: ${UI};
  font-size: 11.4px;
  color: #000;
  & > ${FitBox} { margin-bottom: 1px; }
`;
const Controls = styled.div`
  margin-left: auto;
  display: flex;
  align-items: center;
  padding-right: 18px;
`;
const MenuBar = styled.nav`
  display: flex;
  align-items: center;
  padding-left: 29px;
  background: linear-gradient(#3c3c3c, #222);
  color: #cacaca;
  line-height: 20px;
`;
const Brand = styled.span`
  font-size: 18px;
  color: #0a9fd6;
  margin-left: 11px;
  display: flex;
`;
const MenuItem = styled.span`
  display: flex;
  align-items: center;
  margin-left: ${(p) => p.$ml}px;
`;
const MenuCaret = styled.i`
  margin: 5px 0 0 6px;
  border: 4px solid transparent;
  border-top-color: #cacaca;
  border-bottom: 0;
`;
const Work = styled.div`
  display: grid;
  grid-template-columns: 299px 3px 1px 655px;
`;
const Splitter = styled.div`
  background: ${(p) => p.$c};
`;
const PanelHead = styled.div`
  height: 35px;
  background: #e2e2e2;
  display: flex;
  align-items: center;
  padding: 4px 0 0 8px;
`;
const TreeRow = styled.div`
  display: flex;
  align-items: center;
  height: 22px;
  padding-left: 4px;
  color: #000;
  font: 12px/16px "DejaVu Sans", Verdana, sans-serif;
`;
const ServerIcon = styled.svg`
  margin-bottom: 4px;
`;
const TabStrip = styled.div`
  height: 35px;
  background: #e2e2e2;
  display: flex;
  align-items: flex-end;
  gap: 1.6px;
  font-size: 13px;
`;
const Tab = styled.div`
  flex: none;
  display: flex;
  align-items: center;
  width: ${(p) => p.$w}px;
  height: 25px;
  padding: 2px 0 0 7px;
  border-radius: 4px 4px 0 0;
  background: #e6e6e6;
  color: #337ab7;
  svg { color: #000; }
  ${(p) => p.$on && css`
    height: 30px;
    padding: 8px 0 0 8px;
    background: #fff;
    color: #000;
  `}
`;
const Dashboard = styled.div`
  padding: 15px 15px 0;
`;
const BlockTitle = styled.div`
  height: 22px;
  line-height: 22px;
  padding-left: 7px;
  border-radius: 5px;
  background: #2c76b4;
  color: #fff;
  font-size: 12px;
  font-weight: 700;
`;
const Block = styled.div`
  height: ${(p) => p.$h}px;
  margin: 2px 0 20px;
  border: 1px solid #dcdcdc;
  border-radius: 5px;
  background: linear-gradient(#e8e8e8, #f5f5f5);
  box-shadow: inset 0 1px 3px rgba(0, 0, 0, 0.05);
`;
const Lockup = styled.div`
  display: flex;
  padding: 26px 0 0 26px;
  height: 134px;
`;
const Wordmark = styled.div`
  margin: 20px 0 0 4px;
`;
const WordmarkTop = styled.div`
  display: flex;
  height: 36px;
  font-size: 35px;
  line-height: 36px;
  color: #2a78bd;
  -webkit-text-stroke: 0.4px #2a78bd;
`;
const Underlined = styled.span`
  height: 36px;
  border-bottom: 2px solid #000;
`;
const Version = styled.span`
  margin: 22px 0 0 4px;
  font-size: 13.7px;
  line-height: 16px;
  color: #111;
  -webkit-text-stroke: 0;
`;
const Motto = styled.div`
  margin: 5px 0 0 1px;
  font-size: 17.5px;
  line-height: 20px;
  color: #000;
  -webkit-text-stroke: 0.5px #000;
`;
const Feature = styled.div`
  margin: 0 0 9px 24px;
  font-size: 18px;
  line-height: 20px;
`;
const Blurb = styled.div`
  display: flex;
  flex-direction: column;
  margin-left: 24px;
  line-height: 20px;
`;
const Links = styled.div`
  display: grid;
  grid-template-columns: repeat(${(p) => p.$n}, 1fr);
  width: 604px;
  margin: 23px 0 0 9px;
`;
const Link = styled.a`
  display: flex;
  flex-direction: column;
  align-items: center;
  color: #337ab7;
  line-height: 20px;
`;
const LinkIcon = styled.span`
  display: flex;
  justify-content: center;
  height: ${(p) => p.$h || 57}px;
  padding: ${(p) => (p.$nudge ? "1px 4px 0 0" : 0)};
`;

function MainMenu() {
  return (
    <MenuBar>
      <Elephant width={25} height={24} edge="none" edgeWidth={0} fill="none" line="#0f86ad" lineWidth={15} />
      <Brand><Fit w={83.5}>pgAdmin 4</Fit></Brand>
      <MenuItem $ml={30.5}><Fit w={23}>File</Fit><MenuCaret /></MenuItem>
      <MenuItem $ml={30}><Fit w={41}>Object</Fit><MenuCaret /></MenuItem>
      <MenuItem $ml={30}><Fit w={32}>Tools</Fit><MenuCaret /></MenuItem>
      <MenuItem $ml={30.5}><Fit w={28.5}>Help</Fit><MenuCaret /></MenuItem>
    </MenuBar>
  );
}

function Browser() {
  return (
    <div>
      <PanelHead>
        <FaBinoculars size={13} color="#333" />
        <Fit w={47.5} ml={5}>Browser</Fit>
      </PanelHead>
      <TreeRow>
        <svg width="15" height="24" viewBox="0 0 15 24">
          <path d="M4.500 0v5M9.500 10.500h6" stroke="#888" strokeDasharray="1 1" fill="none" />
          <rect x=".5" y="6.500" width="8" height="8" rx="1" fill="#fff" stroke="#888" />
          <path d="M2 10.500h5M4.500 8v5" stroke="#333f77" />
        </svg>
        <Gap $w={4.5} />
        <ServerIcon width="11" height="17" viewBox="0 0 11 17">
          <path d="M1.500 3L3 .8h5.500L10 3v13.500H1.500z" fill="#a892a6" stroke="#7a6372" />
          <path d="M2.500 4h4v1.500h-4zM2.500 6.500h4V8h-4zM2.500 10.500h4V12h-4zM2.500 13.500h4V15h-4z" fill="#efe8ee" />
          <path d="M7 6h2v2H7zM7 10h2v2H7zM7 13.500h2v1.500H7z" fill="#2cc3bd" />
        </ServerIcon>
        <Fit w={45} ml={6.5}>Servers</Fit>
      </TreeRow>
    </div>
  );
}

function Tabs() {
  return (
    <TabStrip>
      <Tab $on $w={96}><Glyph name="dashboard" size={13} /><Fit w={62.5} ml={4.5}>Dashboard</Fit></Tab>
      <Tab $w={93.5}><Glyph name="cogs" size={14} /><Fit w={59} ml={3.5}>Properties</Fit></Tab>
      <Tab $w={57.5}><Glyph name="file" size={13} /><Fit w={25.5} ml={3}>SQL</Fit></Tab>
      <Tab $w={90}><Glyph name="chart" size={13} /><Fit w={55} ml={5}>Statistics</Fit></Tab>
      <Tab $w={114.5}><FaRegHandPointUp size={12.5} /><Fit w={82} ml={4}>Dependencies</Fit></Tab>
      <Tab $w={101}><FaRegHandPointDown size={12.5} /><Fit w={69} ml={3}>Dependents</Fit></Tab>
    </TabStrip>
  );
}

function Welcome() {
  return (
    <>
      <BlockTitle><Fit w={54}>Welcome</Fit></BlockTitle>
      <Block $h={279}>
        <Lockup>
          <Elephant width={92} height={95} edge="#111" edgeWidth={37} fill="#336791" line="#fff" lineWidth={13} />
          <Wordmark>
            <WordmarkTop>
              <Fit w={42.5}>pg</Fit>
              <Underlined><Fit w={105.5}>Admin</Fit></Underlined>
              <Version><Fit w={58.5}>Version 4</Fit></Version>
            </WordmarkTop>
            <Motto><Fit w={294.5}>Management Tools for PostgreSQL</Fit></Motto>
          </Wordmark>
        </Lockup>
        <Feature><Fit w={419}>Feature rich | Maximises PostgreSQL | Open Source</Fit></Feature>
        <Blurb>
          <Fit w={531}>pgAdmin is an open source administration and management tool for the PostgreSQL</Fit>
          <Fit w={538.5}>database. The tools include a graphical administration interface, an SQL query tool, a</Fit>
          <Fit w={554.5}>procedural code debugger and much more. The tool is designed to answer the needs of</Fit>
          <Fit w={318.5}>developers, DBAs and system administrators alike.</Fit>
        </Blurb>
      </Block>
    </>
  );
}

function PgAdmin() {
  return (
    <AdminWindow>
      <TitleRow>
        <Elephant width={16} height={16} edge="#9fb9cd" edgeWidth={12} fill="#336791" line="#c9d8e4" lineWidth={11} />
        <Fit w={59.5} ml={5}>pgAdmin 4</Fit>
        <Controls>
          <svg width="10" height="10" viewBox="0 0 10 10"><path d="M0 5.500h10" stroke="#000" /></svg>
          <Gap $w={35} />
          <svg width="10" height="10" viewBox="0 0 10 10"><path d="M.5.500h9v9h-9z" fill="none" stroke="#000" /></svg>
          <Gap $w={36} />
          <svg width="10" height="10" viewBox="0 0 10 10"><path d="M0 0l10 10M10 0L0 10" stroke="#000" strokeWidth="1.100" /></svg>
        </Controls>
      </TitleRow>
      <MainMenu />
      <Work>
        <Browser />
        <Splitter $c="#dcdcdc" />
        <Splitter $c="#9e9e9e" />
        <div>
          <Tabs />
          <Dashboard>
            <Welcome />
            <BlockTitle><Fit w={67}>Quick Links</Fit></BlockTitle>
            <Block $h={126}>
              <Links $n={2}>
                <Link><LinkIcon><Glyph name="server" size={56} /></LinkIcon><Fit w={102}>Add New Server</Fit></Link>
                <Link><LinkIcon><Glyph name="cogs" size={56} /></LinkIcon><Fit w={121.5}>Configure pgAdmin</Fit></Link>
              </Links>
            </Block>
            <BlockTitle><Fit w={85}>Getting Started</Fit></BlockTitle>
            <Block $h={148}>
              <Links $n={4}>
                <Link>
                  <LinkIcon $h={59} $nudge>
                    <Elephant width={52} height={51} edge="#000" edgeWidth={34} fill="#000" line="#ededed" lineWidth={10} />
                  </LinkIcon>
                  <Fit w={77}>PostgreSQL</Fit><Fit w={94.5}>Documentation</Fit>
                </Link>
                <Link><LinkIcon><Globe /></LinkIcon><Fit w={110.5}>pgAdmin Website</Fit></Link>
                <Link><LinkIcon><Glyph name="book" size={56} /></LinkIcon><Fit w={121}>Planet PostgreSQL</Fit></Link>
                <Link><LinkIcon><Glyph name="users" size={56} /></LinkIcon><Fit w={69.5}>Community</Fit><Fit w={50}>Support</Fit></Link>
              </Links>
            </Block>
          </Dashboard>
        </div>
      </Work>
    </AdminWindow>
  );
}

/* ---------- taskbar ---------- */
const Bar = styled.footer`
  grid-column: 1 / -1;
  display: flex;
  background: #000;
  color: #f2f2f2;
  font-family: ${UI};
`;
const StartButton = styled.div`
  width: 48px;
  display: flex;
  align-items: center;
  justify-content: center;
`;
const SearchField = styled.div`
  width: 344px;
  display: flex;
  align-items: center;
  padding: 2px 0 0 12px;
  background: #333;
  color: #9b9b9b;
  font-size: 14.2px;
  line-height: 20px;
`;
const TaskSlot = styled.div`
  width: 48px;
  margin-right: 1px;
  display: flex;
  align-items: center;
  justify-content: center;
  background: ${(p) => (p.$active ? "#333" : "transparent")};
  background-image: ${(p) => (p.$line ? "linear-gradient(#76b9ed, #76b9ed)" : "none")};
  background-repeat: no-repeat;
  background-position: 50% 100%;
  background-size: ${(p) => p.$line || 0}px 2px;
`;
const Tray = styled.div`
  margin-left: auto;
  display: flex;
  align-items: center;
`;
const Clock = styled.div`
  display: flex;
  flex-direction: column;
  align-items: center;
  width: 46px;
  margin: 0 11px 1px 19px;
  font-size: 11.4px;
  line-height: 17px;
`;
const PeekEdge = styled.div`
  width: 5px;
  height: 40px;
  border-left: 1px solid #5a5a5a;
`;

function Taskbar() {
  return (
    <Bar>
      <StartButton>
        <svg width="16" height="16" viewBox="0 0 16 16" fill="#fff"><path d="M0 2.300L6.500 1.400V7.500H0zM7.300 1.300L16 0v7.500H7.300zM0 8.400h6.500v6.200L0 13.700zM7.300 8.400H16V16l-8.700-1.200z" /></svg>
      </StartButton>
      <SearchField><Fit w={195.5}>Search the web and Windows</Fit></SearchField>
      <TaskSlot>
        <svg width="20" height="14" viewBox="0 0 20 14" fill="none" stroke="#fff"><path d="M4.500.500h11v13h-11zM3 2.500H.500v9H3M17 2.500h2.500v9H17" /></svg>
      </TaskSlot>
      <Gap $w={1} />
      <TaskSlot $line={40}>
        <svg width="20" height="22" viewBox="0 0 20 22"><path d="M.3 9.800C1.200 3.500 5.200 0 10.500 0 16.500 0 20 4.500 20 10v2.500H7c.3 3.600 3 5 6 5 2.200 0 4-.5 5.600-1.500v4.500C16.800 21.500 14.500 22 12 22 6 22 2.700 18.300 2.700 13.500c0-3.500 2-6.500 5-8C4 5.500 1.800 7.400.3 9.800zM7.200 8.500h7.500c0-2.500-1.200-4-3.600-4-2.200 0-3.600 1.600-3.900 4z" fill="#0078d7" /></svg>
      </TaskSlot>
      <TaskSlot $line={40}>
        <svg width="22" height="20" viewBox="0 0 22 20">
          <path d="M1 2h9l1.500 2H22v15H1z" fill="#f8d775" /><path d="M1 1h9v2H1z" fill="#e9b93a" /><path d="M1 6h21v13H1z" fill="#fce9a0" />
          <path d="M4 19v-7q0-1.500 1.500-1.500h12q1.500 0 1.500 1.500v7h-4v-4H8v4z" fill="#29b6ea" />
        </svg>
      </TaskSlot>
      <TaskSlot>
        <svg width="22" height="24" viewBox="0 0 22 24">
          <path d="M6 7q0-6 4-6t5 5M9 7q0-5 4-5t4 5" fill="none" stroke="#fff" strokeWidth="1.300" />
          <path d="M0 9l21-3v18L1 21z" fill="#fff" />
          <path d="M4 10.500l4.500-.6v4.600H4zM9.500 9.800L15 9v5.500H9.500zM4 15.500h4.500v4L4 19zM9.500 15.500H15v5l-5.500-.8z" fill="#000" />
        </svg>
      </TaskSlot>
      <TaskSlot>
        <svg width="20" height="21" viewBox="0 0 20 21"><rect width="20" height="21" rx="4" fill="#df2a20" /><path d="M2 6q5-2 8 .5Q13 4 18 6v9q-5-1-8 1-3-2-8-1z" fill="#fff" /><path d="M10 6.500V16" stroke="#df2a20" strokeWidth=".8" /></svg>
      </TaskSlot>
      <TaskSlot>
        <svg width="20" height="23" viewBox="0 0 20 23"><path d="M1 .5h12.500L19.500 12l-1 2h-4v8.500H1z" fill="#db4526" stroke="#5d2a20" /><path d="M5 6.500q3.500-2.500 6.500 0-3 2-6.500 0zM5 11.500q3 4 8 2.500" fill="none" stroke="#333" strokeWidth="1" /><circle cx="8.300" cy="6.500" r="1.300" fill="#222" /></svg>
      </TaskSlot>
      <TaskSlot>
        <svg width="22" height="22" viewBox="0 0 22 22"><path d="M.5 1.500Q6 3 11 .5 16 3 21.500 1.500 22 17 11 21.500 0 17 .5 1.500z" fill="#fff" /><path d="M2.500 3.500Q7 4 11 2.500 15 4 19.500 3.500 19.500 15.500 11 19.500 2.500 15.500 2.500 3.500z" fill="#c8102e" /><path d="M6.200 13V6.200L11 10l4.800-3.800V13" fill="none" stroke="#fff" strokeWidth="2.300" /></svg>
      </TaskSlot>
      <TaskSlot $active $line={48}>
        <Elephant width={24} height={24} edge="#a5b8c6" edgeWidth={26} fill="#336791" line="#c5d6e2" lineWidth={11} />
      </TaskSlot>
      <TaskSlot $line={40}>
        <svg width="23" height="22" viewBox="0 0 23 22">
          <rect x="11" y="2" width="11.500" height="18" fill="#fff" /><path d="M13 5.500h8M13 8.500h8M13 11.500h8M13 14.500h8M13 17.500h6" stroke="#2b579a" strokeWidth="1.200" />
          <path d="M0 2.500L13 0v22L0 19.500z" fill="#2b579a" />
          <text x="6.500" y="15" fontSize="10.500" fontWeight="700" fill="#fff" textAnchor="middle" style={icoText}>W</text>
        </svg>
      </TaskSlot>
      <Tray>
        <svg width="12" height="7" viewBox="0 0 12 7"><path d="M.5 6.500L6 1l5.500 5.500" fill="none" stroke="#fff" strokeWidth="1.200" /></svg>
        <Gap $w={19} />
        <svg width="15" height="9" viewBox="0 0 15 9"><path d="M.5.500h13v8H.500zM14.500 3v3" fill="none" stroke="#fff" /><rect x="2" y="2" width="6" height="5" fill="#fff" /></svg>
        <Gap $w={16} />
        <svg width="15" height="12" viewBox="0 0 15 12" fill="none" stroke="#fff"><path d="M.5 4h2L5.500.800v10.400L2.500 8h-2zM9 3.500l5 5M14 3.500l-5 5" strokeWidth="1.100" /></svg>
        <Gap $w={17} />
        <svg width="16" height="16" viewBox="0 0 16 16" fill="none" stroke="#fff"><path d="M.5.500h15v12H10.500L8 15l-2.500-2.500H.500zM3 4h10M3 6.500h10M3 9h6" strokeWidth="1.200" /></svg>
        <Gap $w={16} />
        <svg width="23" height="13" viewBox="0 0 23 13" fill="none" stroke="#fff"><rect x=".5" y=".5" width="22" height="12" rx="1" /><path d="M3 3.500h17M3 6.500h17" strokeDasharray="1.500 1" /><path d="M3 9.500h2M6.500 9.500h10M18 9.500h2" /></svg>
        <Clock><Fit w={27.5}>08:59</Fit><Fit w={46}>9/8/2016</Fit></Clock>
        <PeekEdge />
      </Tray>
    </Bar>
  );
}

export default function App() {
  return (
    <>
      <GlobalStyle />
      <Desktop>
        <WordWindow>
          <WordHeader />
          <WordRibbon />
          <WordDocument />
          <WordStatus />
          <EdgeShade />
        </WordWindow>
        <PgAdmin />
        <Taskbar />
      </Desktop>
    </>
  );
}
